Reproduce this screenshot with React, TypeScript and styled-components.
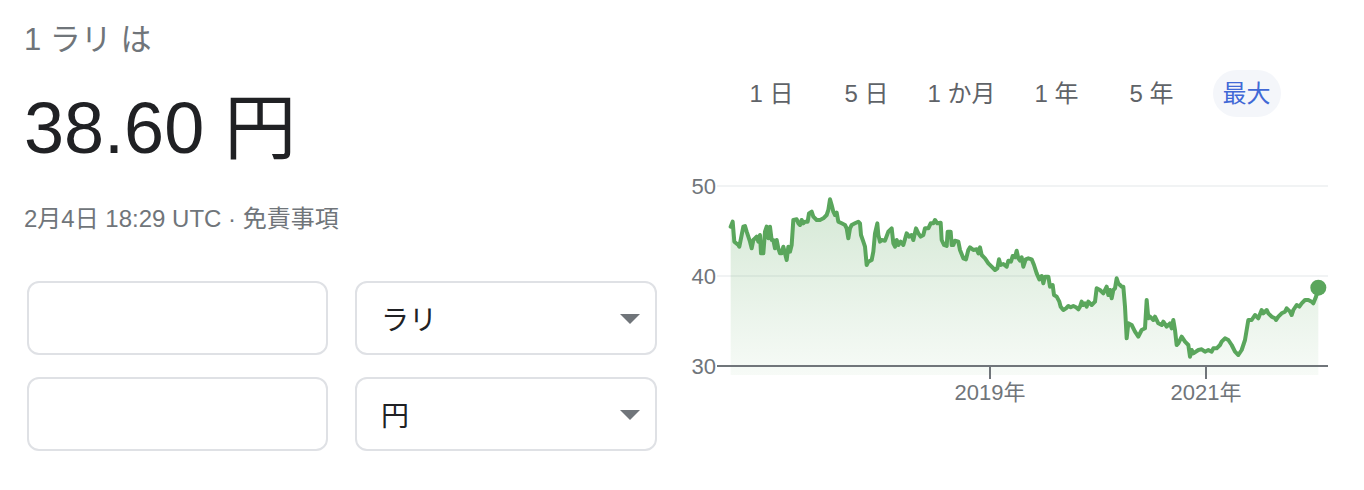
import React from "react";
import styled, { createGlobalStyle } from "styled-components";

const GlobalStyle = createGlobalStyle`
  html, body { margin: 0; padding: 0; background: #ffffff; }
  body { font-family: "Liberation Sans", Arial, "Noto Sans CJK JP", sans-serif; }
  * { box-sizing: border-box; }
`;

const Page = styled.div`
  display: flex;
  align-items: flex-start;
  padding: 22px 0 0 24px;
  width: 1364px;
  height: 490px;
`;

const LeftColumn = styled.div`
  display: flex;
  flex-direction: column;
  width: 633px;
`;

const Heading = styled.div`
  font-size: 31px;
  line-height: 36px;
  color: #70757a;
`;

const Amount = styled.div`
  margin-top: 30px;
  font-size: 72px;
  line-height: 80px;
  color: #202124;
`;

const Stamp = styled.div`
  margin-top: 37px;
  font-size: 24px;
  line-height: 28px;
  color: #70757a;
`;

const Form = styled.div`
  display: grid;
  grid-template-columns: 301px 302px;
  grid-auto-rows: 74px;
  column-gap: 27px;
  row-gap: 22px;
  margin: 48px 0 0 3px;
`;

const Field = styled.div`
  border: 2px solid #dfe1e5;
  border-radius: 12px;
  background: #fff;
`;

const Select = styled(Field)`
  display: flex;
  align-items: center;
  justify-content: space-between;
  padding: 0 15px 0 24px;
  font-size: 28px;
  color: #202124;
`;

const Caret = styled.span`
  width: 0;
  height: 0;
  border-left: 10px solid transparent;
  border-right: 10px solid transparent;
  border-top: 10px solid #70757a;
  margin-top: 2px;
`;

const RightColumn = styled.div`
  display: flex;
  flex-direction: column;
  margin-left: 27px;
  margin-top: 48px;
  width: 656px;
`;

const Tabs = styled.div`
  display: grid;
  grid-template-columns: repeat(6, 95px);
  margin-left: 40px;
`;

const Tab = styled.div<{ $active?: boolean }>`
  justify-self: center;
  height: 47px;
  line-height: 47px;
  padding: 0 10px;
  border-radius: 24px;
  font-size: 24px;
  white-space: nowrap;
  color: ${(p) => (p.$active ? "#4169d6" : "#5f6368")};
  background: ${(p) => (p.$active ? "#f4f6fa" : "transparent")};
`;

const ChartSvg = styled.svg`
  display: block;
  margin-top: 48px;
  overflow: visible;
`;

const AxisText = styled.text`
  font-family: "Liberation Sans", Arial, "Noto Sans CJK JP", sans-serif;
  font-size: 22px;
  fill: #70757a;
`;

type Seg = { ox: number; oy: number; p: number[] };

const segs: Seg[] = [
  {
    ox: 685,
    oy: 170,
    p: [
      137, 170, 143, 155, 148, 215, 160, 225, 163, 230, 170, 195, 175, 170, 180, 168, 185, 185, 195, 215,
      200, 235, 205, 210, 210, 205, 215, 200, 220, 215, 225, 195, 228, 250, 235, 250, 240, 185, 245, 170,
      250, 205, 255, 170, 260, 210, 265, 210, 270, 235, 275, 210, 280, 235, 285, 250, 290, 250, 295, 230,
      300, 250, 305, 270, 310, 230, 315, 245, 320, 225, 325, 150, 335, 148, 340, 160, 345, 165, 350, 150,
      355, 160, 360, 155, 368, 155, 372, 130, 380, 125, 385, 140, 395, 150, 405, 150, 415, 145, 425, 135,
      430, 120, 435, 88, 440, 105, 445, 125, 450, 135, 455, 128, 460, 155, 470, 160, 480, 165, 485, 175,
      490, 205, 495, 175, 500, 165, 510, 160, 520, 155, 525, 160, 528, 195, 535, 215, 540, 230, 545, 285,
      550, 275, 560, 270, 565, 245, 570, 190, 577, 160, 580, 195, 585, 215, 590, 210, 600, 212,
    ],
  },
  {
    ox: 880,
    oy: 170,
    p: [
      15, 210, 25, 185, 35, 175, 40, 220, 45, 230, 50, 210, 55, 225, 62, 215, 70, 225, 80, 190, 88, 200,
      95, 195, 100, 210, 108, 175, 115, 190, 122, 200, 130, 195, 135, 175, 145, 175, 152, 160, 160, 160,
      165, 150, 172, 160, 182, 158, 185, 210, 192, 225, 200, 228, 203, 185, 212, 185, 215, 225, 220, 225,
      225, 212, 235, 215, 240, 240, 250, 265, 258, 268, 265, 240, 270, 232, 280, 240, 290, 238, 295, 250,
      300, 232, 305, 255, 315, 265, 325, 280, 335, 290, 345, 300, 352, 295, 357, 268, 362, 285, 370, 282,
      380, 290, 385, 272, 393, 275, 398, 258, 405, 262, 410, 242, 415, 265, 420, 272, 425, 262, 430, 290,
      437, 268, 445, 265, 455, 268, 462, 285, 470, 310, 478, 328, 485, 318, 490, 340, 495, 320, 505, 320,
      510, 350, 518, 345, 522, 375, 530, 380, 538, 395, 542, 410, 550, 420, 558, 415, 565, 408, 572, 412,
      580, 408, 588, 412, 595, 418, 600, 410,
    ],
  },
  {
    ox: 1075,
    oy: 170,
    p: [
      15, 402, 20, 395, 25, 405, 30, 400, 35, 410, 40, 395, 50, 405, 60, 395, 65, 355, 75, 360, 85, 370,
      95, 350, 100, 375, 105, 360, 110, 385, 115, 360, 120, 355, 125, 325, 130, 340, 135, 345, 140, 350,
      145, 350, 150, 410, 155, 505, 160, 460, 170, 465, 180, 485, 190, 500, 200, 480, 210, 475, 215, 390,
      220, 445, 225, 440, 235, 450, 240, 440, 250, 460, 260, 465, 265, 455, 275, 470, 285, 460, 290, 475,
      295, 450, 300, 480, 305, 525, 310, 520, 320, 500, 330, 515, 340, 525, 345, 560, 350, 540, 355, 550,
      370, 540, 380, 538, 390, 545, 400, 540, 410, 545, 415, 535, 425, 535, 435, 525, 440, 515, 450, 505,
      460, 510, 470, 525, 480, 545, 490, 555, 500, 540, 510, 510, 520, 450, 530, 450, 540, 435, 550, 445,
      560, 420, 565, 430, 575, 420, 580, 430, 590, 440, 600, 445,
    ],
  },
  {
    ox: 1100,
    oy: 260,
    p: [
      528, 180, 535, 170, 545, 160, 555, 155, 560, 145, 570, 155, 575, 165, 580, 150, 590, 135, 598, 140,
      605, 130, 615, 120, 625, 120, 635, 125, 640, 130, 648, 110, 655, 83,
    ],
  },
];

const OX = 684;
const OY = 165;

const points: [number, number][] = (() => {
  const pts: [number, number][] = [];
  for (const seg of segs) {
    for (let i = 0; i < seg.p.length; i += 2) {
      const x = seg.ox + seg.p[i] / 3 - OX;
      const y = seg.oy + seg.p[i + 1] / 3 - OY;
      if (pts.length && x <= pts[pts.length - 1][0]) continue;
      pts.push([+x.toFixed(2), +y.toFixed(2)]);
    }
  }
  return pts;
})();

const linePath = points.map((p, i) => `${i ? "L" : "M"}${p[0]} ${p[1]}`).join(" ");
const first = points[0];
const last = points[points.length - 1];
const areaPath = `${linePath} L${last[0]} 210 L${first[0]} 210 Z`;

const GREEN = "#5aa65c";

function Chart() {
  return (
    <ChartSvg width={656} height={245} viewBox="0 0 656 245">
      <defs>
        <linearGradient id="areaFill" x1="0" y1="21" x2="0" y2="210" gradientUnits="userSpaceOnUse">
          <stop offset="0" stopColor={GREEN} stopOpacity={0.27} />
          <stop offset="1" stopColor={GREEN} stopOpacity={0.05} />
        </linearGradient>
      </defs>
      <line x1={33} y1={21} x2={644} y2={21} stroke="#f1f3f4" strokeWidth={2} />
      <line x1={33} y1={111} x2={644} y2={111} stroke="#f1f3f4" strokeWidth={2} />
      <path d={areaPath} fill="url(#areaFill)" />
      <line x1={33} y1={201} x2={644} y2={201} stroke="#70757a" strokeWidth={2} />
      <line x1={306} y1={201} x2={306} y2={214} stroke="#70757a" strokeWidth={2} />
      <line x1={522} y1={201} x2={522} y2={214} stroke="#70757a" strokeWidth={2} />
      <AxisText x={32} y={29} textAnchor="end">50</AxisText>
      <AxisText x={32} y={119} textAnchor="end">40</AxisText>
      <AxisText x={32} y={209} textAnchor="end">30</AxisText>
      <AxisText x={306} y={235} textAnchor="middle">2019年</AxisText>
      <AxisText x={522} y={235} textAnchor="middle">2021年</AxisText>
      <path d={linePath} fill="none" stroke={GREEN} strokeWidth={4} strokeLinejoin="round" strokeLinecap="round" />
      <circle cx={last[0]} cy={last[1]} r={8} fill={GREEN} />
    </ChartSvg>
  );
}

const tabs = ["1 日", "5 日", "1 か月", "1 年", "5 年", "最大"];

export default function App() {
  return (
    <>
      <GlobalStyle />
      <Page>
        <LeftColumn>
          <Heading>1 ラリ は</Heading>
          <Amount>38.60 円</Amount>
          <Stamp>2月4日 18:29 UTC · 免責事項</Stamp>
          <Form>
            <Field />
            <Select>
              <span>ラリ</span>
              <Caret />
            </Select>
            <Field />
            <Select>
              <span>円</span>
              <Caret />
            </Select>
          </Form>
        </LeftColumn>
        <RightColumn>
          <Tabs>
            {tabs.map((t, i) => (
              <Tab key={t} $active={i === tabs.length - 1}>
                {t}
              </Tab>
            ))}
          </Tabs>
          <Chart />
        </RightColumn>
      </Page>
    </>
  );
}
